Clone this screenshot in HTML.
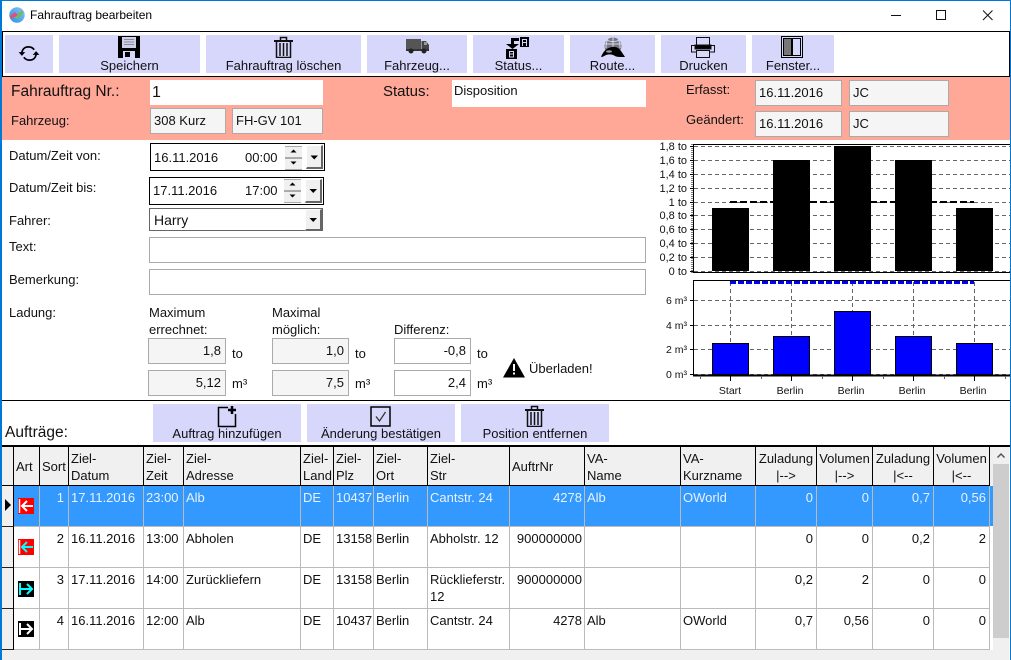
<!DOCTYPE html>
<html><head><meta charset="utf-8"><title>Fahrauftrag bearbeiten</title>
<style>
html,body{margin:0;padding:0;background:#fff}
#w{position:relative;width:1011px;height:660px;overflow:hidden;background:#fff;font:13px/17px "Liberation Sans",sans-serif;color:#111}
#w div,#w svg{position:absolute}
.t{white-space:nowrap}
.btn{background:#d7d7fc;top:35px;height:38px;text-align:center}
.btn span{position:absolute;left:0;right:0;top:22px;line-height:17px}
.f{box-sizing:border-box;border:1px solid #aaa;background:#f5f5f5;padding:0 3px;line-height:24px;white-space:nowrap}
.r{text-align:right;padding-right:4px}
.wh{background:#fff}
.dd{box-sizing:border-box;width:17px;background:#f0f0f0;border-right:2px solid #666;border-bottom:2px solid #666;border-top:1px solid #fff;border-left:1px solid #fff}
table{position:absolute;left:2px;top:447px;border-collapse:separate;border-spacing:0;table-layout:fixed;width:988px;background:#fff}
th,td{box-sizing:border-box;overflow:hidden;font:13px/17px "Liberation Sans",sans-serif;text-align:left;vertical-align:top;padding:3px 2px 0 2px;white-space:nowrap}
th{height:39px;background:#f0f0f0;font-weight:normal;border-right:1px solid #000;border-bottom:1px solid #000}
td{height:41px;border-right:1px solid #bbb;border-bottom:1px solid #bbb}
td:first-child{background:#f0f0f0;border-right:1px solid #000;border-bottom:1px solid #222}
th:first-child{border-right:1px solid #000}
td.n{text-align:right;padding-right:3px}
td.a{padding-right:2px}
th.c{text-align:center;padding:3px 0 0 0}
th.m{padding-top:11px}
tr.s td{background:#3399ff;color:#e8f2ff}
tr.s td:first-child{background:#f0f0f0;color:#000}
tr.s td:nth-child(2){background:#3399ff}
</style></head><body>
<div id="w">
<!-- window frame -->
<div style="left:0;top:0;width:1011px;height:1px;background:#0078d7"></div>
<div style="left:0;top:0;width:2px;height:660px;background:#0078d7"></div>
<div style="left:1010px;top:0;width:1px;height:660px;background:#0078d7"></div>
<!-- title bar -->
<svg style="left:9px;top:7px" width="16" height="16" viewBox="0 0 16 16"><defs><linearGradient id="gl" x1="0" y1="1" x2="1" y2="0"><stop offset="0" stop-color="#2b8ee8"/><stop offset="1" stop-color="#8ac6f0"/></linearGradient></defs><circle cx="8" cy="8" r="7.7" fill="url(#gl)"/><path d="M1 9 L6 5 L9 8 L2 12Z" fill="#e0507c"/><path d="M6 11 L13 3 L14 6 L8 12Z" fill="#6fbf4a"/></svg>
<div class="t" style="left:30px;top:7px;font-size:12px;line-height:17px;color:#000">Fahrauftrag bearbeiten</div>
<svg style="left:880px;top:8px" width="125" height="16" viewBox="0 0 125 16" fill="none" stroke="#111" stroke-width="1"><path d="M11 7.500H21"/><rect x="56.500" y="2.500" width="9" height="9"/><path d="M103 2.500L112.500 12M112.500 2.500L103 12"/></svg>

<!-- toolbar -->
<div style="left:2px;top:31px;width:1006px;height:44px;border:1px solid #000"></div>
<div class="btn" style="left:5px;width:48px"></div>
<div class="btn" style="left:59px;width:141px"><span>Speichern</span></div>
<div class="btn" style="left:206px;width:155px"><span>Fahrauftrag löschen</span></div>
<div class="btn" style="left:367px;width:100px"><span>Fahrzeug...</span></div>
<div class="btn" style="left:473px;width:91px"><span>Status...</span></div>
<div class="btn" style="left:570px;width:85px"><span>Route...</span></div>
<div class="btn" style="left:661px;width:85px"><span>Drucken</span></div>
<div class="btn" style="left:752px;width:82px"><span>Fenster...</span></div>
<!-- refresh -->
<svg style="left:18px;top:45px" width="22" height="17" viewBox="0 0 22 18" fill="none" stroke="#000" stroke-width="1.800"><path d="M3.500 8C4 4 7 2 10.500 2C13 2 15 3 16.500 5"/><path d="M18.500 10C18 14 15 16 11.500 16C9 16 7 15 5.500 13"/><path d="M0 7.500H7L3.500 11.500Z" fill="#000" stroke="none"/><path d="M15 10.500H22L18.500 6.500Z" fill="#000" stroke="none"/></svg>
<!-- save -->
<svg style="left:118px;top:36px" width="22" height="22" viewBox="0 0 22 22"><path d="M0 0H22V22H0Z" fill="#000"/><rect x="4" y="1" width="14" height="11" fill="#d0d0e4"/><path d="M6 3.500H16M6 6H16M6 8.500H16" stroke="#8888a0"/><rect x="5" y="15" width="12" height="7" fill="#d7d7fc"/><rect x="7" y="16" width="5" height="5" fill="#000"/></svg>
<!-- trash -->
<svg style="left:274px;top:36px" width="19" height="22" viewBox="0 0 19 22" fill="none" stroke="#111"><path d="M0 5H19" stroke-width="2"/><path d="M6.500 4V1.500H12.500V4" stroke-width="1.500"/><path d="M2.500 6V21.500H16.500V6" stroke-width="1.500"/><path d="M6 7V20M9.500 7V20M13 7V20" stroke-width="1.500"/></svg>
<!-- truck -->
<svg style="left:406px;top:38px" width="23" height="16" viewBox="0 0 23 16"><rect x="0" y="1" width="15" height="11" fill="#555"/><path d="M15.500 3H20L23 7V12H15.500Z" fill="#444"/><rect x="18" y="4" width="3" height="3" fill="#999"/><rect x="0" y="11" width="23" height="2" fill="#333"/><circle cx="5" cy="13" r="2.500" fill="#222"/><circle cx="18" cy="13" r="2.500" fill="#222"/></svg>
<!-- status -->
<svg style="left:506px;top:36px" width="23" height="23" viewBox="0 0 23 23"><path d="M13 2H5V8H0L6.500 13L13 8H8V5H13Z" fill="#000"/><rect x="14" y="1" width="9" height="10" fill="#000"/><path d="M16.500 10V3.500H20.500V10M16.500 6.500H20.500" fill="none" stroke="#d7d7fc" stroke-width="1"/><rect x="0" y="13" width="11" height="10" fill="#000"/><path d="M3.500 15.500H7.500V21H3.500ZM3.500 18H8" fill="none" stroke="#d7d7fc" stroke-width="1"/></svg>
<!-- route -->
<svg style="left:601px;top:37px" width="24" height="21" viewBox="0 0 24 21"><circle cx="12" cy="9" r="8.500" fill="#777"/><path d="M3 7H21M12 .5V10M6 3C9 5 15 5 18 3" stroke="#d7d7fc" fill="none"/><path d="M7 1.500C5 5 5 8 5 11M17 1.500C19 5 19 8 19 11" stroke="#d7d7fc" fill="none"/><path d="M0 20C2 15 5 11 11 10C17 9 19 12 24 20C18 20 16 20 14 19C11 17 8 17 5 18C3 19 2 20 0 20Z" fill="#000"/><ellipse cx="8" cy="14.500" rx="3" ry="1.200" fill="#999"/></svg>
<!-- printer -->
<svg style="left:691px;top:37px" width="24" height="21" viewBox="0 0 24 21" fill="none" stroke="#111" stroke-width="1"><path d="M5.500 8V.5H18.500V8"/><path d="M5.500 15H.5V8.500H23.500V15H18.500"/><rect x="4" y="8" width="16" height="4" fill="#000"/><rect x="5.500" y="13.500" width="13" height="7"/></svg>
<!-- fenster -->
<svg style="left:781px;top:36px" width="22" height="22" viewBox="0 0 22 22" fill="none" stroke="#000"><rect x=".5" y=".5" width="21" height="21"/><rect x="2.500" y="2.500" width="8" height="17" fill="#777"/><rect x="11.500" y="2.500" width="8" height="17"/></svg>

<!-- header band -->
<div style="left:2px;top:77px;width:1008px;height:63px;background:#ffa898"></div>
<div class="t" style="left:11px;top:83px;font-size:15.500px;line-height:18px">Fahrauftrag Nr.:</div>
<div class="wh" style="left:150px;top:80px;width:171px;height:25px;padding-left:2px;font-size:16px;line-height:26px;white-space:nowrap">1</div>
<div class="t" style="left:383px;top:83px;font-size:15px;line-height:18px">Status:</div>
<div class="wh" style="left:452px;top:80px;width:192px;height:27px;padding-left:2px;line-height:21px;white-space:nowrap">Disposition</div>
<div class="t" style="left:11px;top:112px">Fahrzeug:</div>
<div class="f" style="left:150px;top:108px;width:76px;height:26px">308 Kurz</div>
<div class="f" style="left:232px;top:108px;width:91px;height:26px">FH-GV 101</div>
<div class="t" style="left:686px;top:81px">Erfasst:</div>
<div class="t" style="left:686px;top:111px">Geändert:</div>
<div class="f" style="left:755px;top:80px;width:87px;height:26px;">16.11.2016</div>
<div class="f" style="left:849px;top:80px;width:100px;height:26px">JC</div>
<div class="f" style="left:755px;top:111px;width:87px;height:26px">16.11.2016</div>
<div class="f" style="left:849px;top:111px;width:100px;height:26px">JC</div>

<!-- form -->
<div class="t" style="left:9px;top:147px">Datum/Zeit von:</div>
<div class="t" style="left:9px;top:179px">Datum/Zeit bis:</div>
<div class="t" style="left:9px;top:212px">Fahrer:</div>
<div class="t" style="left:9px;top:238px">Text:</div>
<div class="t" style="left:9px;top:271px">Bemerkung:</div>

<div style="left:150px;top:143px;width:173px;height:26px;border:1px solid #000"></div>
<div class="t" style="left:154px;top:149px">16.11.2016</div>
<div class="t" style="left:245px;top:149px">00:00</div>
<div style="left:285px;top:146px;width:17px;height:10px;background:#f0f0f0;border:0 solid #aaa;border-width:1px 0"></div>
<div style="left:285px;top:158px;width:17px;height:10px;background:#f0f0f0;border:0 solid #aaa;border-width:1px 0"></div>
<svg style="left:285px;top:146px" width="17" height="23" viewBox="0 0 17 23"><path d="M5.500 6.500H11.500L8.500 3.500Z"/><path d="M5.500 15.500H11.500L8.500 18.500Z"/></svg>
<div class="dd" style="left:306px;top:145px;height:24px"></div>
<svg style="left:306px;top:145px" width="17" height="24" viewBox="0 0 17 24"><path d="M4.500 10.500H12L8.250 14.500Z"/></svg>

<div style="left:149px;top:177px;width:173px;height:26px;border:1px solid #000"></div>
<div class="t" style="left:153px;top:182px;">17.11.2016</div>
<div class="t" style="left:245px;top:182px">17:00</div>
<div style="left:284px;top:179px;width:17px;height:10px;background:#f0f0f0;border:0 solid #aaa;border-width:1px 0"></div>
<div style="left:284px;top:191px;width:17px;height:10px;background:#f0f0f0;border:0 solid #aaa;border-width:1px 0"></div>
<svg style="left:284px;top:179px" width="17" height="23" viewBox="0 0 17 23"><path d="M5.500 6.500H11.500L8.500 3.500Z"/><path d="M5.500 15.500H11.500L8.500 18.500Z"/></svg>
<div class="dd" style="left:305px;top:179px;height:24px"></div>
<svg style="left:305px;top:179px" width="17" height="24" viewBox="0 0 17 24"><path d="M4.500 10H12L8.250 14Z"/></svg>

<div style="left:149px;top:208px;width:172px;height:21px;border:1px solid #666;background:#fff"></div>
<div class="t" style="left:154px;top:212px;font-size:14px">Harry</div>
<div class="dd" style="left:305px;top:209px;height:22px"></div>
<svg style="left:305px;top:209px" width="17" height="22" viewBox="0 0 17 22"><path d="M4.500 9H12L8.250 13Z"/></svg>

<div style="left:149px;top:237px;width:495px;height:24px;border:1px solid #aaa"></div>
<div style="left:149px;top:269px;width:495px;height:24px;border:1px solid #aaa"></div>

<div class="t" style="left:9px;top:304px">Ladung:</div>
<div style="left:149px;top:304px;line-height:17px" class="t">Maximum<br>errechnet:</div>
<div style="left:272px;top:304px;line-height:17px" class="t">Maximal<br>möglich:</div>
<div style="left:394px;top:321px" class="t">Differenz:</div>

<div class="f r" style="left:148px;top:338px;width:78px;height:26px">1,8</div>
<div class="f r" style="left:148px;top:370px;width:78px;height:26px">5,12</div>
<div class="f r" style="left:272px;top:338px;width:77px;height:26px">1,0</div>
<div class="f r" style="left:272px;top:370px;width:77px;height:26px">7,5</div>
<div class="f r wh" style="left:394px;top:338px;width:77px;height:26px">-0,8</div>
<div class="f r wh" style="left:394px;top:370px;width:77px;height:26px">2,4</div>
<div class="t" style="left:232px;top:345px">to</div>
<div class="t" style="left:232px;top:375px">m³</div>
<div class="t" style="left:355px;top:345px">to</div>
<div class="t" style="left:355px;top:375px">m³</div>
<div class="t" style="left:477px;top:345px">to</div>
<div class="t" style="left:477px;top:375px">m³</div>
<svg style="left:503px;top:358px" width="22" height="20" viewBox="0 0 22 20"><path d="M11 0L22 19.500H0Z" fill="#000"/><path d="M10 6H12V13H10ZM10 14.500H12V16.500H10Z" fill="#fff"/></svg>
<div class="t" style="left:529px;top:360px">Überladen!</div>

<!-- charts -->
<svg style="left:660px;top:140px" width="350" height="260" viewBox="660 140 350 260" font-family="Liberation Sans" font-size="11" fill="#111" shape-rendering="crispEdges">
<g stroke="#666" stroke-dasharray="4 3" stroke-width="1">
<path d="M694 146.500H1010M694 160.500H1010M694 174.500H1010M694 188.500H1010M694 202.500H1010M694 215.500H1010M694 229.500H1010M694 243.500H1010M694 257.500H1010M694 271.500H1010"/>
</g>
<g fill="#000">
<rect x="712" y="208" width="37" height="63"/><rect x="773" y="160" width="37" height="111"/><rect x="834" y="146" width="37" height="125"/><rect x="895" y="160" width="37" height="111"/><rect x="956" y="208" width="37" height="63"/>
</g>
<path d="M730 202H974" stroke="#000" stroke-width="2" stroke-dasharray="7 3"/>
<path d="M693 144.500H1010M693.500 144V273M693 272.500H1010" stroke="#000" stroke-width="1" fill="none"/>
<path d="M692 144V273" stroke="#000" stroke-width="1" stroke-dasharray="1 1"/>
<g stroke="#000"><path d="M690 146.500H693M690 160.500H693M690 174.500H693M690 188.500H693M690 202.500H693M690 215.500H693M690 229.500H693M690 243.500H693M690 257.500H693M690 271.500H693"/></g>
<g text-anchor="end" shape-rendering="auto">
<text x="687" y="150">1,8 to</text><text x="687" y="164">1,6 to</text><text x="687" y="178">1,4 to</text><text x="687" y="192">1,2 to</text><text x="687" y="206">1 to</text><text x="687" y="219">0,8 to</text><text x="687" y="233">0,6 to</text><text x="687" y="247">0,4 to</text><text x="687" y="261">0,2 to</text><text x="687" y="275">0 to</text>
</g>
<g stroke="#666" stroke-dasharray="4 3">
<path d="M694 300.500H1010M694 325.500H1010M694 349.500H1010M694 374.500H1010"/>
<path d="M730.500 282V374M791.500 282V374M852.500 282V374M913.500 282V374M974.500 282V374"/>
</g>
<g fill="#0000ff" stroke="#000">
<rect x="712.500" y="343.500" width="36" height="31"/><rect x="773.500" y="336.500" width="36" height="38"/><rect x="834.500" y="311.500" width="36" height="63"/><rect x="895.500" y="336.500" width="36" height="38"/><rect x="956.500" y="343.500" width="36" height="31"/>
</g>
<path d="M693.500 280V376M693 280.500H1010" stroke="#000" fill="none"/>
<path d="M730 282.500H974" stroke="#0000ff" stroke-width="3" stroke-dasharray="6 2"/>
<path d="M693 375.500H1010" stroke="#000" stroke-width="2"/>
<g stroke="#000"><path d="M690 300.500H693M690 325.500H693M690 349.500H693M690 374.500H693M730.500 376V381M791.500 376V381M852.500 376V381M913.500 376V381M974.500 376V381"/></g>
<g stroke="#666"><path d="M700.500 376V379M761.500 376V379M822.500 376V379M883.500 376V379M944.500 376V379M1005.500 376V379"/></g>
<g text-anchor="end" shape-rendering="auto" font-size="10.500">
<text x="687" y="304">6 m³</text><text x="687" y="329">4 m³</text><text x="687" y="353">2 m³</text><text x="687" y="378">0 m³</text>
</g>
<g text-anchor="middle" shape-rendering="auto" font-size="10.500">
<text x="730" y="394">Start</text><text x="790" y="394">Berlin</text><text x="851" y="394">Berlin</text><text x="912" y="394">Berlin</text><text x="973" y="394">Berlin</text>
</g>
</svg>

<!-- lower toolbar -->
<div style="left:2px;top:400px;width:1008px;height:1px;background:#000"></div>
<div style="left:2px;top:445px;width:1008px;height:2px;background:#000"></div>
<div class="t" style="left:5px;top:424px;font-size:15.500px;line-height:18px">Aufträge:</div>
<div class="btn" style="left:153px;top:404px;width:148px"><span style="top:21px">Auftrag hinzufügen</span></div>
<div class="btn" style="left:307px;top:404px;width:148px"><span style="top:21px">Änderung bestätigen</span></div>
<div class="btn" style="left:461px;top:404px;width:148px"><span style="top:21px">Position entfernen</span></div>
<svg style="left:217px;top:405px" width="22" height="23" viewBox="0 0 22 23" fill="none" stroke="#000"><path d="M11 2.500H1.500V21.500H18.500V9" stroke-width="1.500"/><path d="M15 1V9M11 5H19" stroke-width="2.500"/></svg>
<svg style="left:370px;top:406px" width="22" height="21" viewBox="0 0 22 21" fill="none" stroke="#000"><rect x="1" y="1" width="19" height="19" stroke-width="1.500"/><path d="M6 10.500L9.500 15L15.500 6" stroke-width="1.300" stroke="#333"/></svg>
<svg style="left:525px;top:405px" width="19" height="22" viewBox="0 0 19 22" fill="none" stroke="#111"><path d="M0 5H19" stroke-width="2"/><path d="M6.500 4V1.500H12.500V4" stroke-width="1.500"/><path d="M2.500 6V21.500H16.500V6" stroke-width="1.500"/><path d="M6 7V20M9.500 7V20M13 7V20" stroke-width="1.500"/></svg>

<!-- grid -->
<div style="left:2px;top:447px;width:991px;height:39px;background:#f0f0f0"></div>
<div style="left:990px;top:486px;width:3px;height:40px;background:#3399ff"></div>
<table>
<colgroup><col style="width:12px"><col style="width:26px"><col style="width:29px"><col style="width:75px"><col style="width:40px"><col style="width:117px"><col style="width:33px"><col style="width:40px"><col style="width:54px"><col style="width:82px"><col style="width:75px"><col style="width:96px"><col style="width:75px"><col style="width:61px"><col style="width:56px"><col style="width:61px"><col style="width:56px"></colgroup>
<tr><th></th><th class="m">Art</th><th class="m">Sort</th><th>Ziel-<br>Datum</th><th>Ziel-<br>Zeit</th><th>Ziel-<br>Adresse</th><th>Ziel-<br>Land</th><th>Ziel-<br>Plz</th><th>Ziel-<br>Ort</th><th>Ziel-<br>Str</th><th class="m">AuftrNr</th><th>VA-<br>Name</th><th>VA-<br>Kurzname</th><th class="c">Zuladung<br>|--&gt;</th><th class="c">Volumen<br>|--&gt;</th><th class="c">Zuladung<br>|&lt;--</th><th class="c">Volumen<br>|&lt;--</th></tr>
<tr class="s"><td></td><td></td><td class="n" style="padding-right:4px">1</td><td>17.11.2016</td><td>23:00</td><td>Alb</td><td>DE</td><td>10437</td><td>Berlin</td><td>Cantstr. 24</td><td class="n a">4278</td><td>Alb</td><td>OWorld</td><td class="n">0</td><td class="n">0</td><td class="n">0,7</td><td class="n">0,56</td></tr>
<tr><td></td><td></td><td class="n" style="padding-right:4px">2</td><td>16.11.2016</td><td>13:00</td><td>Abholen</td><td>DE</td><td>13158</td><td>Berlin</td><td>Abholstr. 12</td><td class="n a">900000000</td><td></td><td></td><td class="n">0</td><td class="n">0</td><td class="n">0,2</td><td class="n">2</td></tr>
<tr><td></td><td></td><td class="n" style="padding-right:4px">3</td><td>17.11.2016</td><td>14:00</td><td>Zurückliefern</td><td>DE</td><td>13158</td><td>Berlin</td><td>Rücklieferstr.<br>12</td><td class="n a">900000000</td><td></td><td></td><td class="n">0,2</td><td class="n">2</td><td class="n">0</td><td class="n">0</td></tr>
<tr><td></td><td></td><td class="n" style="padding-right:4px">4</td><td>16.11.2016</td><td>12:00</td><td>Alb</td><td>DE</td><td>10437</td><td>Berlin</td><td>Cantstr. 24</td><td class="n a">4278</td><td>Alb</td><td>OWorld</td><td class="n">0,7</td><td class="n">0,56</td><td class="n">0</td><td class="n">0</td></tr>
</table>
<svg style="left:5px;top:499px" width="7" height="12" viewBox="0 0 7 12"><path d="M0 0L6 6L0 12Z" fill="#000"/></svg>
<svg style="left:18px;top:498px" width="16" height="16" viewBox="0 0 16 16" fill="none"><rect width="16" height="16" fill="#f00"/><path d="M1.500 1V15" stroke="#fff" stroke-width="1.500"/><path d="M4 8H15M9 3L4 8L9 13" stroke="#fff" stroke-width="2"/></svg>
<svg style="left:18px;top:539px" width="16" height="16" viewBox="0 0 16 16" fill="none"><rect width="16" height="16" fill="#f00"/><path d="M1.500 1V15" stroke="#fff" stroke-width="1.500"/><path d="M4 8H15M9 3L4 8L9 13" stroke="#0ff" stroke-width="2"/></svg>
<svg style="left:18px;top:581px" width="16" height="16" viewBox="0 0 16 16" fill="none"><rect width="16" height="16" fill="#000"/><path d="M2 2V14" stroke="#0ff" stroke-width="2"/><path d="M2 8H14M9 3L14 8L9 13" stroke="#0ff" stroke-width="2"/></svg>
<svg style="left:18px;top:621px" width="16" height="16" viewBox="0 0 16 16" fill="none"><rect width="16" height="16" fill="#000"/><path d="M2 2V14" stroke="#fff" stroke-width="2"/><path d="M2 8H14M9 3L14 8L9 13" stroke="#fff" stroke-width="2"/></svg>

<!-- scrollbars -->
<div style="left:993px;top:447px;width:16px;height:213px;background:#f0f0f0"></div>
<div style="left:993px;top:464px;width:16px;height:174px;background:#cdcdcd"></div>
<svg style="left:993px;top:447px" width="16" height="16" viewBox="0 0 16 16" fill="none" stroke="#555" stroke-width="1.500"><path d="M4.500 10.500L8 7L11.500 10.500"/></svg>
<div style="left:2px;top:650px;width:991px;height:10px;background:#f0f0f0"></div>
</div>
</body></html>
